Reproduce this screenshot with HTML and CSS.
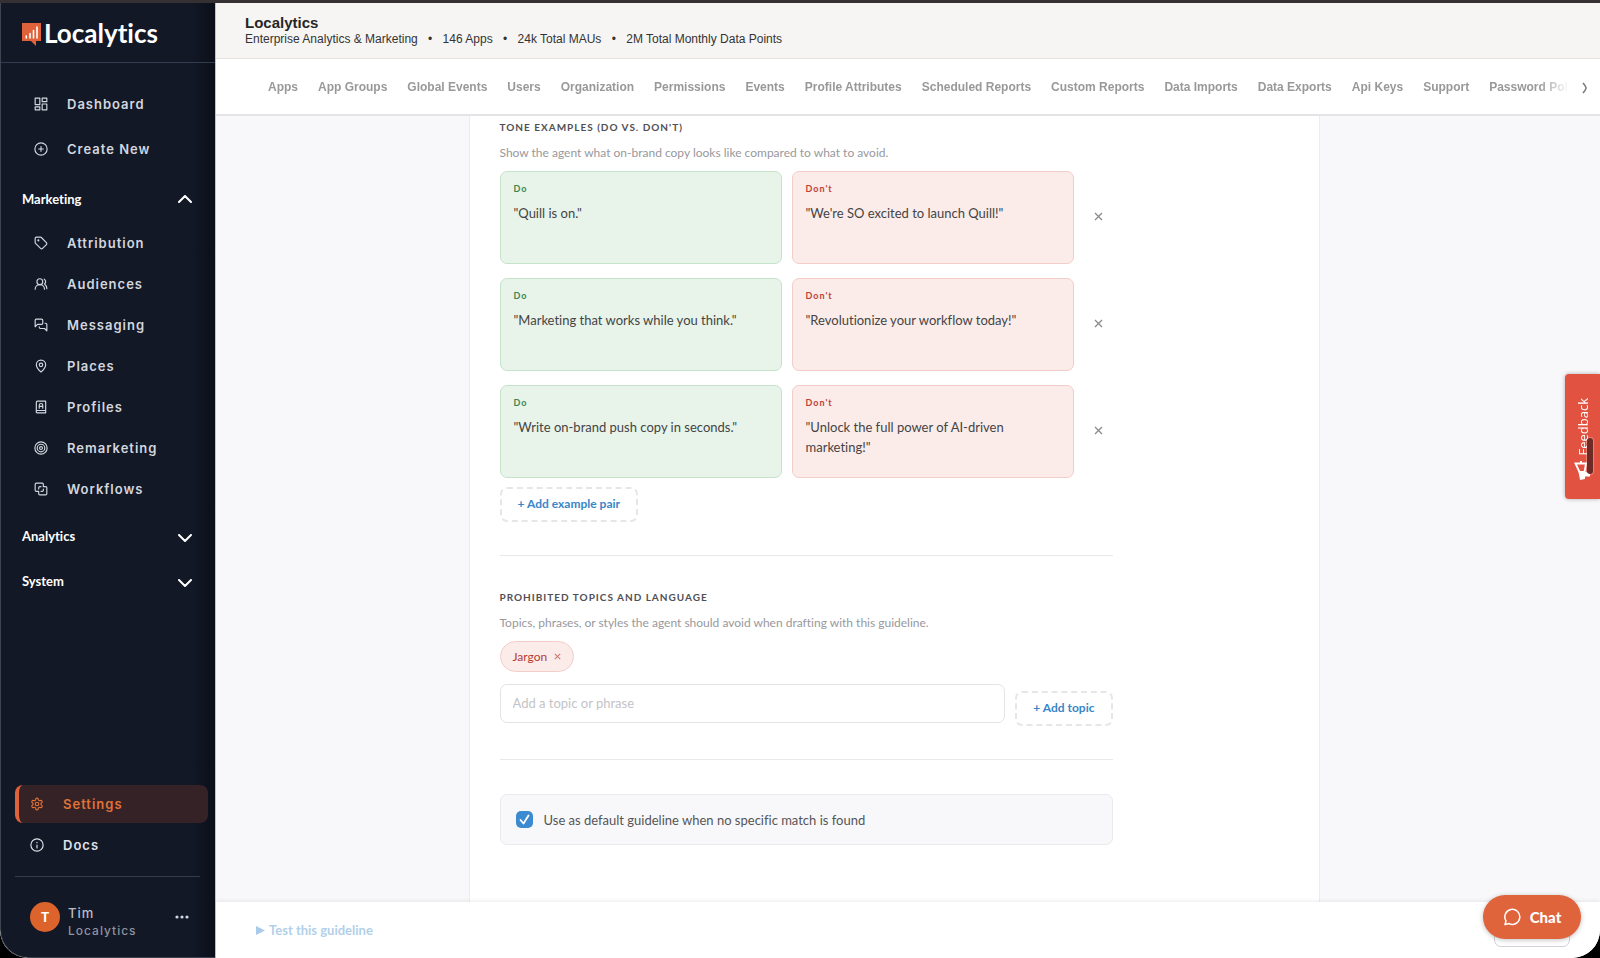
FILE: index.html
```html
<!DOCTYPE html>
<html lang="en">
<head>
  <meta charset="UTF-8">
  <title>Localytics - Settings</title>
  <meta name="viewport" content="width=device-width, initial-scale=1.0">
  <link rel="stylesheet" href="styles.css">
</head>
<body>
  <div class="window">
    <aside class="sidebar">
      <a class="brand" href="#">
        <svg class="brand-mark" width="19" height="23" viewBox="0 0 19 23">
          <path d="M0 0h19v18h-5v5l-5-5H0z" fill="#e0623a"/>
          <path d="M4.300 13v2M8 10.500v4.500M11.500 7.500v7.500M15 4v11" stroke="#fff" stroke-width="1.600" stroke-linecap="round"/>
        </svg>
        <span>Localytics</span>
      </a>

      <nav class="menu">
        <a class="menu-item tall" href="#">
          <svg class="icon" viewBox="0 0 24 24"><rect x="2" y="2" width="8" height="11"/><rect x="14" y="2" width="8" height="6"/><rect x="14" y="12" width="8" height="10"/><rect x="2" y="17" width="8" height="5"/></svg>
          Dashboard
        </a>
        <a class="menu-item tall" href="#">
          <svg class="icon" viewBox="0 0 24 24"><circle cx="12" cy="12" r="10.500"/><path d="M8 12h8M12 8v8"/></svg>
          Create New
        </a>

        <button class="group first" type="button">Marketing
          <svg width="14" height="8" viewBox="0 0 14 8"><path d="M1 7l6-6 6 6"/></svg>
        </button>
        <a class="menu-item" href="#">
          <svg class="icon" viewBox="0 0 24 24"><path d="M12.600 2.600A2 2 0 0 0 11.200 2H4a2 2 0 0 0-2 2v7.200a2 2 0 0 0 .6 1.400l8.700 8.700a2.400 2.400 0 0 0 3.400 0l6.600-6.600a2.400 2.400 0 0 0 0-3.400z"/><circle cx="7.500" cy="7.500" r=".8"/></svg>
          Attribution
        </a>
        <a class="menu-item" href="#">
          <svg class="icon" viewBox="0 0 24 24"><path d="M18 21a8 8 0 0 0-16 0"/><circle cx="10" cy="8" r="5"/><path d="M22 20c0-3.400-2-6.500-4-8a5 5 0 0 0-.5-8.300"/></svg>
          Audiences
        </a>
        <a class="menu-item" href="#">
          <svg class="icon" viewBox="0 0 24 24"><path d="M15 9a2 2 0 0 1-2 2H6l-4 4V4a2 2 0 0 1 2-2h9a2 2 0 0 1 2 2z"/><path d="M19 9h1a2 2 0 0 1 2 2v11l-4-4h-7a2 2 0 0 1-2-2v-1"/></svg>
          Messaging
        </a>
        <a class="menu-item" href="#">
          <svg class="icon" viewBox="0 0 24 24"><path d="M20 10c0 5-5.500 10.200-7.400 11.800a1 1 0 0 1-1.200 0C9.500 20.200 4 15 4 10a8 8 0 0 1 16 0"/><circle cx="12" cy="10" r="3"/></svg>
          Places
        </a>
        <a class="menu-item" href="#">
          <svg class="icon" viewBox="0 0 24 24"><path d="M4 19V4a2 2 0 0 1 2-2h14v20H6a2 2 0 0 1-2-3 2 2 0 0 1 2-1h14"/><path d="M9 14V9a3 3 0 0 1 6 0v5M9 11h6"/></svg>
          Profiles
        </a>
        <a class="menu-item" href="#">
          <svg class="icon" viewBox="0 0 24 24"><circle cx="12" cy="12" r="10.500"/><circle cx="12" cy="12" r="6.500"/><circle cx="12" cy="12" r="2.500"/></svg>
          Remarketing
        </a>
        <a class="menu-item" href="#">
          <svg class="icon" viewBox="0 0 24 24"><path d="M10 22a2 2 0 0 1-2-2v-4H4a2 2 0 0 1-2-2V4a2 2 0 0 1 2-2h10a2 2 0 0 1 2 2v4h4a2 2 0 0 1 2 2v10a2 2 0 0 1-2 2zM8 12v-2a2 2 0 0 1 2-2h2M16 12v2a2 2 0 0 1-2 2h-2"/></svg>
          Workflows
        </a>

        <button class="group" type="button">Analytics
          <svg class="closed" width="14" height="8" viewBox="0 0 14 8"><path d="M1 1l6 6 6-6"/></svg>
        </button>
        <button class="group" type="button">System
          <svg class="closed" width="14" height="8" viewBox="0 0 14 8"><path d="M1 1l6 6 6-6"/></svg>
        </button>
      </nav>

      <div class="sidebar-bottom">
        <a class="bottom-item active" href="#">
          <svg class="icon" viewBox="0 0 24 24"><path d="M12.200 2h-.4a2 2 0 0 0-2 2v.2a2 2 0 0 1-1 1.700l-.4.300a2 2 0 0 1-2 0l-.2-.1a2 2 0 0 0-2.700.7l-.2.400a2 2 0 0 0 .7 2.700l.2.100a2 2 0 0 1 1 1.700v.6a2 2 0 0 1-1 1.700l-.2.100a2 2 0 0 0-.7 2.700l.2.400a2 2 0 0 0 2.700.7l.2-.1a2 2 0 0 1 2 0l.4.300a2 2 0 0 1 1 1.700v.2a2 2 0 0 0 2 2h.4a2 2 0 0 0 2-2v-.2a2 2 0 0 1 1-1.700l.4-.3a2 2 0 0 1 2 0l.2.100a2 2 0 0 0 2.700-.7l.2-.4a2 2 0 0 0-.7-2.700l-.2-.1a2 2 0 0 1-1-1.700v-.6a2 2 0 0 1 1-1.700l.2-.1a2 2 0 0 0 .7-2.700l-.2-.4a2 2 0 0 0-2.700-.7l-.2.100a2 2 0 0 1-2 0l-.4-.3a2 2 0 0 1-1-1.700V4a2 2 0 0 0-2-2z"/><circle cx="12" cy="12" r="3"/></svg>
          Settings
        </a>
        <a class="bottom-item" href="#">
          <svg class="icon" viewBox="0 0 24 24"><circle cx="12" cy="12" r="10.500"/><path d="M12 17v-5M12 7.500v.5"/></svg>
          Docs
        </a>
        <div class="user">
          <span class="avatar">T</span>
          <span class="user-text">
            <span class="user-name">Tim</span>
            <span class="user-org">Localytics</span>
          </span>
          <button class="more" type="button" aria-label="Account menu">
            <svg width="14" height="4" viewBox="0 0 14 4"><circle cx="2" cy="2" r="1.600"/><circle cx="7" cy="2" r="1.600"/><circle cx="12" cy="2" r="1.600"/></svg>
          </button>
        </div>
      </div>
    </aside>

    <div class="page">
      <header class="org">
        <h1>Localytics</h1>
        <p>Enterprise Analytics &amp; Marketing <i>•</i> 146 Apps <i>•</i> 24k Total MAUs <i>•</i> 2M Total Monthly Data Points</p>
      </header>

      <div class="tabs-bar">
        <nav class="tabs">
          <a href="#">Apps</a>
          <a href="#">App Groups</a>
          <a href="#">Global Events</a>
          <a href="#">Users</a>
          <a href="#">Organization</a>
          <a href="#">Permissions</a>
          <a href="#">Events</a>
          <a href="#">Profile Attributes</a>
          <a href="#">Scheduled Reports</a>
          <a href="#">Custom Reports</a>
          <a href="#">Data Imports</a>
          <a href="#">Data Exports</a>
          <a href="#">Api Keys</a>
          <a href="#">Support</a>
          <a href="#">Password Policy</a>
        </nav>
        <button class="tabs-next" type="button" aria-label="More tabs">
          <svg width="6" height="12" viewBox="0 0 6 12"><path d="M1 1q3 3.500 3 5T1 11"/></svg>
        </button>
      </div>

      <main class="content">
        <form class="card">
          <section class="section">
            <h2>Tone examples (do vs. don't)</h2>
            <p class="hint">Show the agent what on-brand copy looks like compared to what to avoid.</p>
            <div class="pairs">
              <div class="pair">
                <div class="example do">
                  <label for="do1">Do</label>
                  <textarea id="do1" rows="2">"Quill is on."</textarea>
                </div>
                <div class="example dont">
                  <label for="dont1">Don't</label>
                  <textarea id="dont1" rows="2">"We're SO excited to launch Quill!"</textarea>
                </div>
                <button class="remove" type="button" aria-label="Remove pair"><svg width="9" height="9" viewBox="0 0 9 9"><path d="M1 1l7 7M8 1l-7 7"/></svg></button>
              </div>
              <div class="pair">
                <div class="example do">
                  <label for="do2">Do</label>
                  <textarea id="do2" rows="2">"Marketing that works while you think."</textarea>
                </div>
                <div class="example dont">
                  <label for="dont2">Don't</label>
                  <textarea id="dont2" rows="2">"Revolutionize your workflow today!"</textarea>
                </div>
                <button class="remove" type="button" aria-label="Remove pair"><svg width="9" height="9" viewBox="0 0 9 9"><path d="M1 1l7 7M8 1l-7 7"/></svg></button>
              </div>
              <div class="pair">
                <div class="example do">
                  <label for="do3">Do</label>
                  <textarea id="do3" rows="2">"Write on-brand push copy in seconds."</textarea>
                </div>
                <div class="example dont">
                  <label for="dont3">Don't</label>
                  <textarea id="dont3" rows="2">"Unlock the full power of AI-driven marketing!"</textarea>
                </div>
                <button class="remove" type="button" aria-label="Remove pair"><svg width="9" height="9" viewBox="0 0 9 9"><path d="M1 1l7 7M8 1l-7 7"/></svg></button>
              </div>
            </div>
            <button class="add" type="button">+ Add example pair</button>
          </section>

          <section class="section">
            <h2>Prohibited topics and language</h2>
            <p class="hint">Topics, phrases, or styles the agent should avoid when drafting with this guideline.</p>
            <span class="chip">Jargon
              <button type="button" aria-label="Remove Jargon"><svg width="7" height="7" viewBox="0 0 9 9"><path d="M1 1l7 7M8 1l-7 7"/></svg></button>
            </span>
            <div class="topic-row">
              <input type="text" placeholder="Add a topic or phrase" aria-label="Topic or phrase">
              <button class="add" type="button">+ Add topic</button>
            </div>
          </section>

          <label class="default-box">
            <input type="checkbox" checked>
            Use as default guideline when no specific match is found
          </label>
        </form>
      </main>

      <footer class="actions">
        <button class="test" type="button">
          <svg width="9" height="9" viewBox="0 0 9 9"><path d="M0 0l9 4.500L0 9z"/></svg>
          Test this guideline
        </button>
        <button class="cancel" type="button" aria-label="Cancel"></button>
      </footer>
    </div>

    <button class="feedback" type="button">
      <svg width="17" height="19" viewBox="0 0 17 19"><path d="M1.500 2.500l4 8.500h5l1.500-8.500z" fill="none" stroke="#fff" stroke-width="1.800"/><path d="M7 0v3" stroke="#fff" stroke-width="2"/><path d="M4.500 10.500h6.500l5 2v3h-5V18l-5 1z" fill="#fff"/></svg>
      <span>Feedback</span>
    </button>
    <div class="scroll-thumb"></div>

    <button class="chat" type="button">
      <svg width="18" height="18" viewBox="0 0 18 18"><path d="M2 16.500l1-3.600a7.500 7.500 0 1 1 3 2.700z"/></svg>
      Chat
    </button>
  </div>
</body>
</html>
```
FILE: styles.css
```css
* {
  box-sizing: border-box;
}

body {
  margin: 0;
  background: #000;
  font-family: Lato, sans-serif;
  font-variant-ligatures: none;
  color: #333;
}

h1, h2, p {
  margin: 0;
}

a {
  text-decoration: none;
}

button {
  font-family: inherit;
  font-variant-ligatures: none;
  padding: 0;
  border: 0;
  background: none;
  cursor: pointer;
}

svg {
  flex: none;
}

.window {
  position: relative;
  display: flex;
  height: 100vh;
  border-top: 3px solid #353133;
  border-radius: 0 0 28px 28px;
  overflow: hidden;
  background: #fff;
}

/* Sidebar */
.sidebar {
  display: flex;
  flex-direction: column;
  flex: none;
  width: 216px;
  background: linear-gradient(to right, #121826 190px, #0b0f19);
  border-left: 1px solid #3f4451;
  border-right: 1px solid #c4c5ca;
  border-bottom: 1px solid #3f4451;
  border-bottom-left-radius: 28px;
  font-family: Inter, sans-serif;
}

.brand {
  display: flex;
  align-items: center;
  gap: 3px;
  height: 60px;
  padding-left: 21px;
  border-bottom: 1px solid #343d50;
  color: #fff;
  font-family: Lato, sans-serif;
  font-size: 26px;
  font-weight: bold;
}

.brand-mark {
  margin-top: 3px;
}

.menu {
  padding-top: 18px;
}

.menu-item {
  display: flex;
  align-items: center;
  gap: 19px;
  height: 41px;
  padding-left: 33px;
  color: #d3d6de;
  font-size: 13px;
  font-weight: 600;
  letter-spacing: 1px;
}

.menu-item.tall {
  height: 45px;
}

.icon {
  width: 14px;
  height: 14px;
  fill: none;
  stroke: currentColor;
  stroke-width: 2;
  stroke-linecap: round;
  stroke-linejoin: round;
}

.group {
  display: flex;
  align-items: center;
  justify-content: space-between;
  width: 100%;
  height: 45px;
  padding: 0 23px 0 21px;
  color: #fff;
  font-family: Lato, sans-serif;
  font-size: 13px;
  font-weight: bold;
}

.group.first {
  margin: 5px 0 1px;
}

.menu-item + .group:not(.first) {
  margin-top: 4px;
}

.group svg {
  fill: none;
  stroke: #fff;
  stroke-width: 2;
  stroke-linecap: round;
  stroke-linejoin: round;
}

.group .closed {
  margin-top: 4px;
}

.sidebar-bottom {
  margin-top: auto;
  padding: 0 7px 18px 14px;
}

.bottom-item {
  display: flex;
  align-items: center;
  gap: 19px;
  height: 38px;
  margin-bottom: 3px;
  padding-left: 15px;
  color: #dfe2e8;
  font-size: 13px;
  font-weight: 600;
  letter-spacing: 1px;
}

.bottom-item.active {
  padding-left: 11px;
  border-left: 4px solid #e0623a;
  border-radius: 8px;
  background: #352226;
  color: #e07238;
}

.user {
  display: flex;
  align-items: flex-start;
  gap: 8px;
  margin: 12px 8px 0 0;
  padding: 25px 11px 0 15px;
  border-top: 1px solid #343b4b;
}

.avatar {
  width: 30px;
  height: 30px;
  border-radius: 50%;
  background: #dc632b;
  color: #fff;
  font-size: 13px;
  font-weight: bold;
  line-height: 30px;
  text-align: center;
}

.user-text {
  display: flex;
  flex: 1;
  flex-direction: column;
  padding-top: 2px;
  letter-spacing: 1px;
}

.user-name {
  color: #b9bcc5;
  font-size: 13px;
  font-weight: 500;
  line-height: 18px;
}

.user-org {
  color: #8f939f;
  font-size: 12px;
  font-weight: 500;
  line-height: 17px;
}

.more {
  display: flex;
  align-items: center;
  height: 30px;
  fill: #d3d6de;
}

/* Header and tabs */
.page {
  display: flex;
  flex: 1;
  flex-direction: column;
  min-width: 0;
}

.org {
  height: 56px;
  padding: 11px 29px 0;
  border-bottom: 1px solid #e4e3e2;
  background: #f6f5f3;
  font-family: "Liberation Sans", Arial, sans-serif;
}

.org h1 {
  color: #262626;
  font-size: 15px;
  line-height: 18px;
}

.org p {
  font-size: 12px;
  line-height: 14px;
}

.org i {
  margin: 0 7px;
  font-style: normal;
}

.tabs-bar {
  display: flex;
  align-items: center;
  flex: none;
  height: 57px;
  padding-left: 52px;
  border-bottom: 2px solid #e4e4e6;
  background: #fff;
}

.tabs {
  display: flex;
  flex: 1;
  gap: 20px;
  overflow: hidden;
  -webkit-mask-image: linear-gradient(to left, transparent, #000 30px);
  mask-image: linear-gradient(to left, transparent, #000 30px);
}

.tabs a {
  color: #999;
  font: bold 12px/16px "Liberation Sans", Arial, sans-serif;
  white-space: nowrap;
}

.tabs-next {
  width: 31px;
  padding-top: 2px;
  line-height: 0;
}

.tabs-next path {
  fill: none;
  stroke: #777;
  stroke-width: 1.500;
}

/* Guideline form */
.content {
  flex: 1;
  min-height: 0;
  padding-right: 28px;
  overflow: hidden;
  background: #f8f8fb;
}

.card {
  max-width: 851px;
  min-height: 100%;
  margin: 0 auto;
  padding: 0 206px 0 30px;
  border: 1px solid #ececf0;
  border-width: 0 1px;
  background: #fff;
}

.section {
  padding: 3px 0 33px;
  border-bottom: 1px solid #e8e8ea;
}

.section + .section {
  padding-top: 33px;
}

.section h2 {
  color: #505055;
  font-size: 10px;
  line-height: 16px;
  letter-spacing: 1px;
  text-transform: uppercase;
}

.hint {
  margin: 9px 0;
  color: #98989d;
  font-size: 12px;
  line-height: 18px;
}

.pairs {
  display: grid;
  gap: 14px;
}

.pair {
  display: grid;
  grid-template-columns: 1fr 1fr 29px;
  gap: 10px;
}

.example {
  height: 93px;
  padding: 10px 13px;
  border: 1px solid;
  border-radius: 7px;
}

.example label {
  display: block;
  font-size: 9px;
  font-weight: bold;
  line-height: 14px;
  letter-spacing: 1px;
}

.example textarea {
  display: block;
  width: 100%;
  margin-top: 7px;
  padding: 0;
  border: 0;
  outline: 0;
  background: none;
  color: #444;
  font-family: inherit;
  font-variant-ligatures: none;
  font-size: 13px;
  line-height: 20px;
  resize: none;
  overflow: hidden;
}

.do {
  background: #e8f4ea;
  border-color: #c5e3ca;
}

.do label {
  color: #3c8650;
}

.dont {
  background: #fbecea;
  border-color: #f3cdc9;
}

.dont label {
  color: #bf4136;
}

.remove {
  padding-bottom: 3px;
}

.remove path,
.chip path {
  fill: none;
  stroke: #8a8a8e;
  stroke-width: 1.300;
}

.add {
  display: block;
  height: 35px;
  margin-top: 9px;
  padding: 0 16px 2px;
  border: 2px dashed #e6e6e9;
  border-radius: 7px;
  color: #3a86c8;
  font-size: 12px;
  font-weight: bold;
  white-space: nowrap;
}

.chip {
  display: inline-flex;
  align-items: center;
  gap: 7px;
  height: 31px;
  padding: 0 12px;
  border: 1px solid #f3cdc9;
  border-radius: 16px;
  background: #fbecea;
  color: #b83a30;
  font-size: 12px;
  vertical-align: top;
}

.chip button {
  line-height: 0;
}

.chip path {
  stroke: #c9766f;
}

.topic-row {
  display: flex;
  align-items: flex-start;
  gap: 10px;
  margin-top: 12px;
}

.topic-row input {
  flex: 1;
  min-width: 0;
  height: 39px;
  padding: 0 12px 2px;
  border: 1px solid #e4e4e8;
  border-radius: 7px;
  font-family: inherit;
  font-size: 13px;
}

.topic-row input::placeholder {
  color: #c3c3c7;
}

.topic-row .add {
  margin-top: 7px;
}

.default-box {
  display: flex;
  align-items: center;
  gap: 11px;
  height: 51px;
  margin-top: 34px;
  padding: 0 15px;
  border: 1px solid #e9e9ee;
  border-radius: 7px;
  background: #f8f8fb;
  color: #555;
  font-size: 13px;
}

.default-box input {
  width: 17px;
  height: 17px;
  margin: 0;
  appearance: none;
  border-radius: 5px;
  background: #3c8ad0 url("data:image/svg+xml,%3Csvg xmlns='http://www.w3.org/2000/svg' viewBox='0 0 17 17'%3E%3Cpath d='M4.500 9l3 3.500 5-8' fill='none' stroke='white' stroke-width='1.800' stroke-linecap='round' stroke-linejoin='round'/%3E%3C/svg%3E");
}

/* Footer bar */
.actions {
  display: flex;
  align-items: center;
  justify-content: space-between;
  z-index: 1;
  height: 56px;
  padding: 0 30px 0 40px;
  background: #fff;
  box-shadow: 0 -1px 4px rgba(0, 0, 0, 0.08);
}

.test {
  display: flex;
  align-items: center;
  gap: 4px;
  color: #b2d0ea;
  font-size: 13px;
  font-weight: bold;
}

.test svg {
  fill: #a9cbe9;
}

.cancel {
  width: 76px;
  height: 34px;
  border: 1px solid #d0d0d8;
  border-radius: 7px;
}

/* Floating widgets */
.feedback {
  position: absolute;
  right: 0;
  top: 371px;
  display: flex;
  flex-direction: column-reverse;
  align-items: center;
  justify-content: center;
  gap: 6px;
  width: 35px;
  height: 125px;
  padding-top: 5px;
  border-radius: 4px 0 0 4px;
  background: #e25241;
  box-shadow: 0 0 4px rgba(0, 0, 0, 0.3);
  color: #fff;
  font-family: "Open Sans", sans-serif;
  font-size: 13px;
}

.feedback span {
  writing-mode: vertical-rl;
  transform: rotate(180deg);
}

.scroll-thumb {
  position: absolute;
  right: 7px;
  top: 435px;
  width: 6px;
  height: 36px;
  border-radius: 3px;
  background: #6e2a24;
  box-shadow: 0 0 1px 1px rgba(255, 255, 255, 0.3);
}

.chat {
  position: absolute;
  right: 19px;
  bottom: 19px;
  z-index: 2;
  display: flex;
  align-items: center;
  justify-content: center;
  gap: 9px;
  width: 98px;
  height: 44px;
  border-radius: 22px;
  background: #df633b;
  box-shadow: 0 1px 5px rgba(0, 0, 0, 0.25);
  color: #fff;
  font-size: 15px;
  font-weight: 900;
}

.chat path {
  fill: none;
  stroke: #fff;
  stroke-width: 1.500;
  stroke-linejoin: round;
}
```
